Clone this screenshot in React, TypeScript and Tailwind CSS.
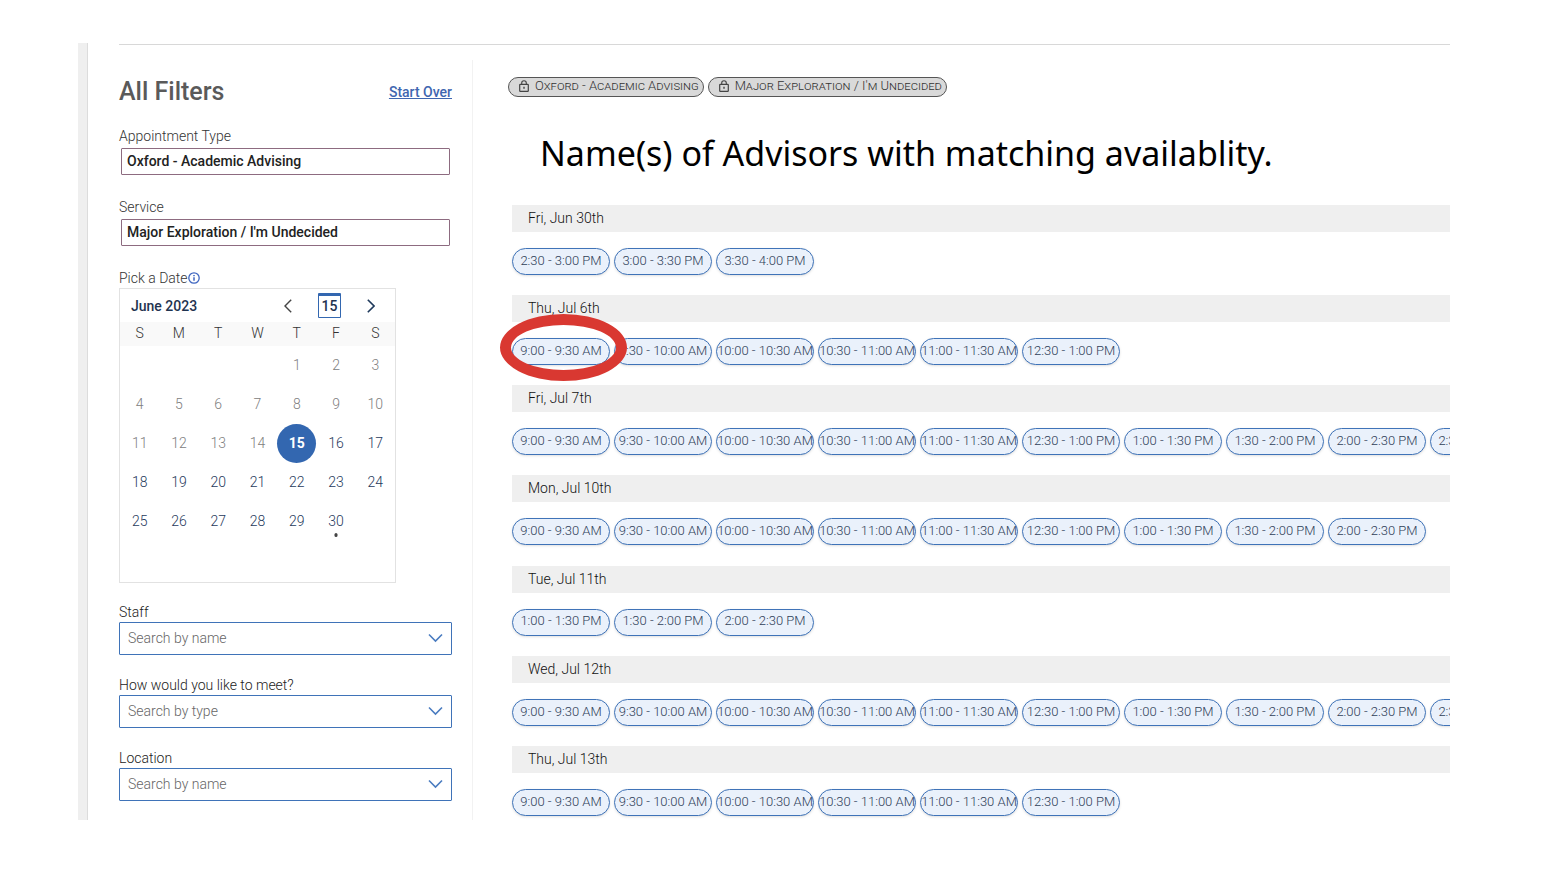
import React, { useId } from 'react';

type Day = { label: string; slots: string[] };

const MORNING = ['9:00 - 9:30 AM', '9:30 - 10:00 AM', '10:00 - 10:30 AM', '10:30 - 11:00 AM', '11:00 - 11:30 AM'];
const SHORT_DAY = [...MORNING, '12:30 - 1:00 PM'];
const LONG_DAY = [...SHORT_DAY, '1:00 - 1:30 PM', '1:30 - 2:00 PM', '2:00 - 2:30 PM'];

const DAYS: Day[] = [
  { label: 'Fri, Jun 30th', slots: ['2:30 - 3:00 PM', '3:00 - 3:30 PM', '3:30 - 4:00 PM'] },
  { label: 'Thu, Jul 6th', slots: SHORT_DAY },
  { label: 'Fri, Jul 7th', slots: [...LONG_DAY, '2:30 - 3:00 PM'] },
  { label: 'Mon, Jul 10th', slots: LONG_DAY },
  { label: 'Tue, Jul 11th', slots: ['1:00 - 1:30 PM', '1:30 - 2:00 PM', '2:00 - 2:30 PM'] },
  { label: 'Wed, Jul 12th', slots: [...LONG_DAY, '2:30 - 3:00 PM'] },
  { label: 'Thu, Jul 13th', slots: SHORT_DAY },
];

const HIGHLIGHTED = { day: 'Thu, Jul 6th', slot: '9:00 - 9:30 AM' };

// June 2023 starts on a Thursday
const FIRST_WEEKDAY = 4;
const DAYS_IN_MONTH = 30;
const TODAY = 15;

const weeks = Array.from({ length: 6 }, (_, week) =>
  Array.from({ length: 7 }, (_, col) => {
    const day = week * 7 + col - FIRST_WEEKDAY + 1;
    return day >= 1 && day <= DAYS_IN_MONTH ? day : null;
  }),
);

function dayClass(day: number) {
  if (day === TODAY) return 'rounded-full bg-[#3367b0] font-bold text-white';
  if (day < TODAY) return 'font-light text-[#808080]';
  return 'font-light text-[#1f3a5c]';
}

function LockedField({ label, value }: { label: string; value: string }) {
  const id = useId();
  return (
    <div className="mb-[22px] flex flex-col gap-0.5">
      <label htmlFor={id} className="text-sm font-light text-[#333]">{label}</label>
      <input
        id={id}
        readOnly
        value={value}
        className="mx-0.5 h-[27px] rounded-[1px] border border-[#8d6b80] px-[5px] pb-0.5 text-sm font-medium text-[#222] outline-none"
      />
    </div>
  );
}

function SearchSelect({ label, placeholder }: { label: string; placeholder: string }) {
  const id = useId();
  return (
    <div className="flex flex-col">
      <label htmlFor={id} className="text-sm font-light text-[#222]">{label}</label>
      <div className="relative">
        <select
          id={id}
          className="h-[33px] w-full appearance-none rounded-[1px] border border-[#3f73b8] bg-white px-2 pb-0.5 text-sm font-light text-[#666]"
        >
          <option>{placeholder}</option>
        </select>
        <svg viewBox="0 0 16 10" fill="none" className="pointer-events-none absolute right-2 top-[11px] h-2.5 w-4">
          <path d="M1 1.5 7.5 8 14 1.5" stroke="#4a7cc0" strokeWidth="1.6" />
        </svg>
      </div>
    </div>
  );
}

function Calendar() {
  return (
    <div className="w-[277px] border border-[#e2e2e2] pb-0.5">
      <div className="flex h-[33px] items-center justify-between pl-[11px] pr-3">
        <span className="text-sm font-medium text-[#1f3350]">June 2023</span>
        <div className="flex items-center gap-[18px]">
          <button type="button" aria-label="Previous month" className="flex w-6 justify-center">
            <svg viewBox="0 0 8 14" fill="none" className="h-3.5 w-2">
              <path d="M7.2.8 1 7l6.2 6.2" stroke="#444" strokeWidth="1.4" />
            </svg>
          </button>
          <button
            type="button"
            aria-label="Go to today"
            className="flex h-[25px] w-[23px] items-center justify-center rounded-[1px] border border-t-[3px] border-[#3367b0] pb-0.5 text-sm font-medium text-[#1f3350]"
          >
            15
          </button>
          <button type="button" aria-label="Next month" className="flex w-6 justify-center">
            <svg viewBox="0 0 8 14" fill="none" className="h-3.5 w-2">
              <path d="M.8.8 7 7 .8 13.2" stroke="#1f3a5c" strokeWidth="1.6" />
            </svg>
          </button>
        </div>
      </div>
      <table className="w-full table-fixed border-collapse text-center text-sm">
        <thead>
          <tr className="h-6 bg-[#f9f9f9]">
            {['S', 'M', 'T', 'W', 'T', 'F', 'S'].map((name, i) => (
              <th key={i} className="p-0 pb-0.5 font-light text-[#333]">{name}</th>
            ))}
          </tr>
        </thead>
        <tbody>
          {weeks.map((week, w) => (
            <tr key={w} className="h-[39px]">
              {week.map((day, i) => (
                <td key={i} className="p-0">
                  {day && (
                    <button type="button" className={`relative h-[39px] w-full pb-0.5 ${dayClass(day)}`}>
                      {day}
                      {day === 30 && <span className="absolute bottom-1 left-1/2 h-1 w-[3px] -translate-x-1/2 rounded-full bg-[#444]" />}
                    </button>
                  )}
                </td>
              ))}
            </tr>
          ))}
        </tbody>
      </table>
    </div>
  );
}

function LockedChip({ label }: { label: string }) {
  return (
    <span className="flex h-5 items-center gap-1.5 rounded-full border border-[#555] bg-[#d9d9d9] pb-0.5 pl-2.5 pr-1 text-[13px] font-light text-[#333]">
      <svg viewBox="0 0 10 12" fill="none" stroke="#444" className="h-3 w-2.5">
        <rect x=".7" y="4.3" width="8.6" height="7" rx=".6" strokeWidth="1.2" />
        <path d="M2.7 4.3V3a2.3 2.3 0 0 1 4.6 0v1.3" strokeWidth="1.1" />
        <path d="M5 6.8v2" strokeWidth="1.4" />
      </svg>
      <span className="[font-variant:small-caps]">{label}</span>
    </span>
  );
}

function DaySlots({ day }: { day: Day }) {
  return (
    <section className="flex flex-col gap-4">
      <h3 className="h-[27px] bg-[#efefef] pl-4 text-sm font-light leading-[27px] text-[#111]">{day.label}</h3>
      <div className="flex gap-1">
        {day.slots.map(slot => (
          <button
            key={slot}
            type="button"
            className="relative flex h-[27px] w-[98px] shrink-0 items-center justify-center whitespace-nowrap rounded-full border border-[#3f73b8] bg-[#eaf1fb] pb-0.5 text-[13px] font-light text-[#2f4058] shadow-sm"
          >
            {slot}
            {day.label === HIGHLIGHTED.day && slot === HIGHLIGHTED.slot && (
              <svg viewBox="0 0 127 67" fill="none" className="absolute -left-[13px] -top-[25px] z-10 h-[67px] w-[127px] max-w-none">
                <path
                  fillRule="evenodd"
                  fill="#d93831"
                  d="M0 33.5a63.5 33.5 0 1 0 127 0a63.5 33.5 0 1 0-127 0ZM11 33.5a52.5 22.5 0 1 0 105 0a52.5 22.5 0 1 0-105 0Z"
                />
              </svg>
            )}
          </button>
        ))}
      </div>
    </section>
  );
}

export default function App() {
  return (
    <div className="bg-white pb-16 pl-[78px] pr-[110px] pt-[43px] font-[Roboto,sans-serif]">
      <div className="flex overflow-hidden">
        <div className="w-2.5 shrink-0 border-r border-[#dcdcdc] bg-[#efefef]" />
        <div className="flex min-w-0 flex-1 flex-col pl-[31px] pt-px">
          <div className="flex border-t border-[#d8d8d8] pt-[15px]">
            <aside className="w-[354px] shrink-0 border-r border-[#f2f2f2] pb-[19px] pr-5">
              <div className="mb-[18px] mt-4 flex items-center justify-between">
                <h2 className="text-[25px] font-medium leading-8 text-[#5a5a5a]">All Filters</h2>
                <a href="#" className="text-sm font-medium text-[#3f66b0] underline">Start Over</a>
              </div>
              <LockedField label="Appointment Type" value="Oxford - Academic Advising" />
              <LockedField label="Service" value="Major Exploration / I'm Undecided" />
              <div className="flex items-center text-sm font-light text-[#333]">
                Pick a Date
                <svg viewBox="0 0 12 12" fill="none" stroke="#3f66c0" className="h-3 w-3">
                  <circle cx="6" cy="6" r="5.2" strokeWidth="1.3" />
                  <path d="M6 5.2v3.6M6 3v1.2" strokeWidth="1.5" />
                </svg>
              </div>
              <Calendar />
              <div className="mt-[19px] flex flex-col gap-5">
                <SearchSelect label="Staff" placeholder="Search by name" />
                <SearchSelect label="How would you like to meet?" placeholder="Search by type" />
                <SearchSelect label="Location" placeholder="Search by name" />
              </div>
            </aside>
            <main className="flex min-w-0 flex-1 flex-col pb-1 pl-[35px] pt-[17px]">
              <div className="flex gap-1">
                <LockedChip label="Oxford - Academic Advising" />
                <LockedChip label="Major Exploration / I'm Undecided" />
              </div>
              <h1 className="mb-7 mt-8 whitespace-nowrap pl-8 font-['Noto_Sans',sans-serif] text-[34px] leading-[48px] text-black">
                Name(s) of Advisors with matching availablity.
              </h1>
              <div className="flex flex-1 flex-col justify-between gap-4 pl-1">
                {DAYS.map(day => (
                  <DaySlots key={day.label} day={day} />
                ))}
              </div>
            </main>
          </div>
        </div>
      </div>
    </div>
  );
}
